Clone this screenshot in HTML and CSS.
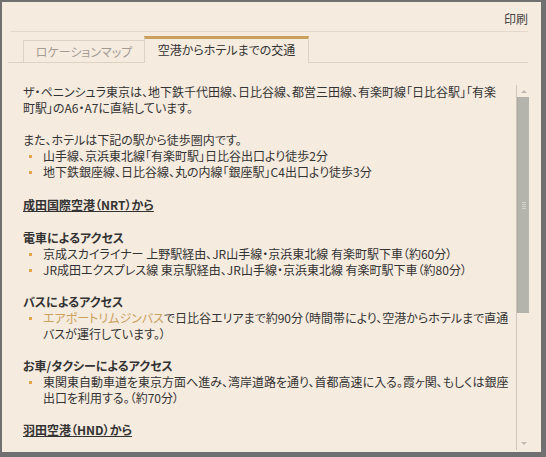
FILE: index.html
```html
<!DOCTYPE html>
<html>
<head>
  <meta charset="UTF-8">
  <title>アクセス</title>
  <link rel="stylesheet" href="styles.css">
</head>
<body>
<div class="frame">
    <div class="toolbar">
        <a class="print">印刷</a>
    </div>
    <div class="tabs">
        <div class="tab">ロケーションマップ</div>
        <div class="tab active">空港からホテルまでの交通</div>
    </div>
    <div class="panel">
        <div class="text">
            <p>ザ・ペニンシュラ東京は、地下鉄千代田線、日比谷線、都営三田線、有楽町線「日比谷駅」「有楽<br>町駅」のA6・A7に直結しています。</p>
            <div class="block">
                <p class="lead">また、ホテルは下記の駅から徒歩圏内です。</p>
                <ul>
                    <li>山手線、京浜東北線「有楽町駅」日比谷出口より徒歩2分</li>
                    <li>地下鉄銀座線、日比谷線、丸の内線「銀座駅」C4出口より徒歩3分</li>
                </ul>
            </div>
            <h2>成田国際空港（NRT）から</h2>
            <h3>電車によるアクセス</h3>
            <ul>
                <li>京成スカイライナー 上野駅経由、JR山手線・京浜東北線 有楽町駅下車（約60分）</li>
                <li>JR成田エクスプレス線 東京駅経由、JR山手線・京浜東北線 有楽町駅下車（約80分）</li>
            </ul>
            <h3>バスによるアクセス</h3>
            <ul>
                <li><a class="link">エアポートリムジンバス</a>で日比谷エリアまで約90分（時間帯により、空港からホテルまで直通<br>バスが運行しています。）</li>
            </ul>
            <h3>お車/タクシーによるアクセス</h3>
            <ul>
                <li>東関東自動車道を東京方面へ進み、湾岸道路を通り、首都高速に入る。霞ヶ関、もしくは銀座<br>出口を利用する。（約70分）</li>
            </ul>
            <h2>羽田空港（HND）から</h2>
        </div>
        <div class="scrollbar">
            <div class="arrow up"></div>
            <div class="thumb"><span class="grip"></span></div>
            <div class="rest"></div>
            <div class="arrow down"></div>
        </div>
    </div>
</div>
</body>
</html>
```

FILE: styles.css
```css
* {
    margin: 0;
    padding: 0;
    box-sizing: border-box;
}
body {
    background-color: #FFF;
    font-family: "Noto Sans CJK JP", "Noto Sans", sans-serif;
    font-size: 12px;
    color: #333;
}
.frame {
    width: 546px;
    height: 457px;
    display: flex;
    flex-direction: column;
    background-color: #F6EBDF;
    border: 2px solid #707070;
    border-right-width: 5px;
    border-bottom-width: 5px;
    font-feature-settings: "palt";
}
.toolbar {
    height: 30px;
    margin: 0 13px 0 8px;
    padding-top: 3px;
    display: flex;
    align-items: center;
    justify-content: flex-end;
    border-bottom: 1px solid #E3D8CA;
}
.print {
    color: #444;
    cursor: pointer;
}
.tabs {
    display: flex;
    align-items: flex-end;
    margin: 0 13px 0 6px;
    padding: 4px 0 0 15px;
    border-bottom: 1px solid #DDD2C3;
}
.tab {
    width: 121px;
    height: 22px;
    line-height: 21px;
    text-align: center;
    color: #A39C95;
    border: 1px solid #DDD2C3;
    border-bottom: none;
    border-right: none;
}
.tab.active {
    width: 165px;
    height: 27px;
    line-height: 22px;
    margin-bottom: -1px;
    color: #333;
    background-color: #F6EBDF;
    border-top: 3px solid #C9A15C;
    border-right: 1px solid #DDD2C3;
}
.panel {
    flex: 1;
    min-height: 0;
    display: flex;
    margin-top: 21px;
    padding-bottom: 2px;
}
.text {
    flex: 1;
    overflow: hidden;
    padding-left: 21px;
    line-height: 16px;
    white-space: nowrap;
}
.text p,
.text ul {
    margin-bottom: 16px;
}
.text .block,
.text h2 {
    margin-bottom: 17px;
}
.text .block ul,
.text p.lead {
    margin-bottom: 0;
}
.text h2 {
    font-size: 12px;
    font-weight: bold;
    text-decoration: underline;
}
.text h3 {
    font-size: 12px;
    font-weight: bold;
}
.text ul {
    list-style: none;
}
.text li {
    position: relative;
    padding-left: 20px;
}
.text li:before {
    content: "";
    position: absolute;
    left: 6px;
    top: 7px;
    width: 3px;
    height: 3px;
    background-color: #E6A44A;
}
.link {
    color: #C9A15C;
    cursor: pointer;
}
.scrollbar {
    width: 14px;
    margin: 1px 11px 0 0;
    display: flex;
    flex-direction: column;
    border-left: 1px solid #CFC6BB;
}
.arrow {
    height: 12px;
    display: flex;
    align-items: center;
    justify-content: center;
}
.arrow:before {
    content: "";
    border-left: 3px solid transparent;
    border-right: 3px solid transparent;
}
.arrow.up:before {
    border-bottom: 3px solid #BDB8B2;
}
.arrow.down {
    height: 14px;
}
.arrow.down:before {
    border-top: 3px solid #BDB8B2;
}
.thumb {
    height: 216px;
    margin-right: 1px;
    display: flex;
    align-items: center;
    justify-content: center;
    background-color: #B4B4AC;
    border-left: 1px solid #A9A9A1;
}
.grip {
    width: 4px;
    height: 7px;
    background: repeating-linear-gradient(#D4D4CE 0, #D4D4CE 1px, transparent 1px, transparent 2px);
}
.rest {
    flex: 1;
}
```
